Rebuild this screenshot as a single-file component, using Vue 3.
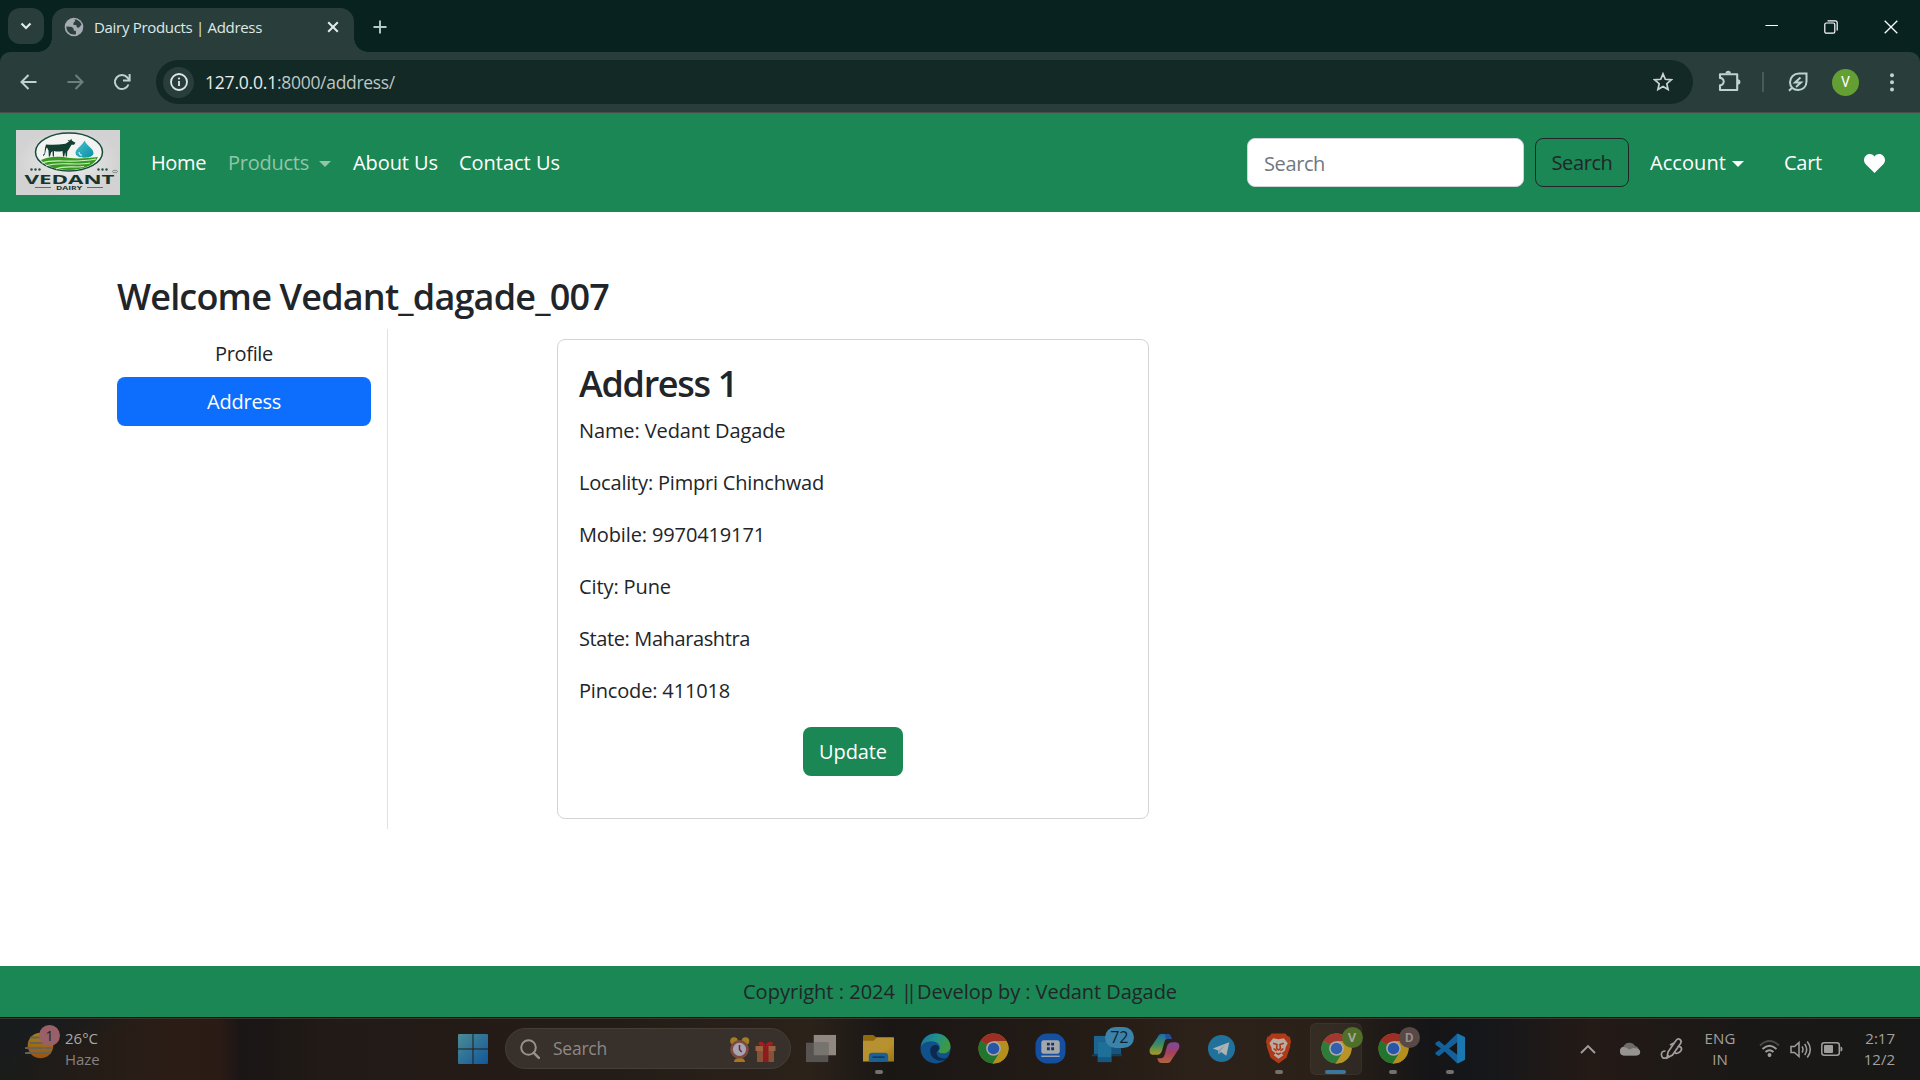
<script setup>
const navLinks = [
  { label: 'Home', width: 55 },
  { label: 'Products', width: 81, muted: true, caret: true },
  { label: 'About Us', width: 85 },
  { label: 'Contact Us', width: 101 },
]

const details = [
  { text: 'Name: Vedant Dagade', width: 206.5 },
  { text: 'Locality: Pimpri Chinchwad', width: 245 },
  { text: 'Mobile: 9970419171', width: 186 },
  { text: 'City: Pune', width: 92 },
  { text: 'State: Maharashtra', width: 171 },
  { text: 'Pincode: 411018', width: 151 },
]

const footerParts = [
  { text: 'Copyright : 2024', width: 152 },
  { text: '||', width: 10 },
  { text: 'Develop by : Vedant Dagade', width: 260 },
]

const apps = [
  { id: 'tasks' },
  { id: 'explorer', dot: true },
  { id: 'edge' },
  { id: 'chrome' },
  { id: 'store' },
  { id: 'phone', badge: '72' },
  { id: 'copilot' },
  { id: 'telegram' },
  { id: 'brave', dot: true },
  { id: 'chrome', active: true, profile: 'V' },
  { id: 'chrome', dot: true, profile: 'D' },
  { id: 'vscode', dot: true },
]

// Tracks a label so that it spans the given number of pixels.
const vFit = {
  mounted(el, { value }) {
    const natural = el.getBoundingClientRect().width
    el.style.letterSpacing = `${(value - natural) / el.textContent.length}px`
  },
}
</script>

<template>
  <div class="screen">
    <svg class="defs" width="0" height="0" aria-hidden="true">
      <defs>
        <linearGradient id="gWin" x1="0" y1="0" x2="1" y2="1"><stop offset="0" stop-color="#4d8b93" /><stop offset="1" stop-color="#10579b" /></linearGradient>
        <linearGradient id="gFolder" x1="0" y1="0" x2="1" y2="1"><stop offset="0" stop-color="#b59237" /><stop offset=".6" stop-color="#b8912c" /><stop offset="1" stop-color="#9b7414" /></linearGradient>
        <linearGradient id="gEdge" x1="0" y1="0" x2="1" y2=".4"><stop offset="0" stop-color="#1b6f9b" /><stop offset=".5" stop-color="#1f8f8f" /><stop offset="1" stop-color="#3f9a3f" /></linearGradient>
        <linearGradient id="gCopA" x1="0" y1="0" x2="0" y2="1"><stop offset="0" stop-color="#1c6fa8" /><stop offset=".5" stop-color="#3d8a63" /><stop offset="1" stop-color="#a89a26" /></linearGradient>
        <linearGradient id="gCopB" x1="0" y1="0" x2="0" y2="1"><stop offset="0" stop-color="#7a4aa0" /><stop offset=".5" stop-color="#a5405f" /><stop offset="1" stop-color="#b0653f" /></linearGradient>
        <linearGradient id="gSun" x1="0" y1="0" x2="0" y2="1"><stop offset="0" stop-color="#a3821c" /><stop offset="1" stop-color="#9c520e" /></linearGradient>
        <linearGradient id="gDrop" x1="0" y1="0" x2="1" y2="1"><stop offset="0" stop-color="#46c2cf" /><stop offset="1" stop-color="#0c8fa3" /></linearGradient>
        <radialGradient id="gLogo"><stop offset="0" stop-color="#ececec" /><stop offset="1" stop-color="#d2d2d2" /></radialGradient>
      </defs>
      <symbol id="tasks" viewBox="0 0 32 32"><path d="M8 2h23v21H8z" fill="#8f8780" /><path d="M0 10h23v20H0z" fill="#565350" /><path d="M8 10h15v13H8z" fill="#77736f" /></symbol>
      <symbol id="explorer" viewBox="0 0 32 32"><path d="M0 3.500q0-1.500 1.500-1.500H10q1 0 1.700.9L13 4h17.500Q32 4 32 5.500V12H0z" fill="#8f6a0c" /><path d="M0 8h11l3-3h18v24.500H0z" fill="url(#gFolder)" /><path d="M6 29.500V24q0-3.500 3.500-3.500h13q3.500 0 3.500 3.500v5.500z" fill="#1d6094" /><path d="M10.500 25h11" stroke="#0f3c66" stroke-width="1.800" stroke-linecap="round" /></symbol>
      <symbol id="edge" viewBox="0 0 32 32"><circle cx="16" cy="16" r="15.500" fill="#12508c" /><path d="M.8 14C2 5 9 .5 16.500.5 25 .5 31.500 7 31.500 14c0 4-3 7-7 7-3 0-5.500-.8-5.500-2 0-.8 1.500-1.500 1.500-4 0-3.500-3.500-6.500-8.500-6.500C6 8.500 2 11.500.8 14z" fill="url(#gEdge)" /><path d="M19 13.500c-4-3-8.500 0-8.500 5 0 6 5.500 10.500 12 10 2.500-.3 4.500-1.500 6-3-3 1.400-9.500 1-11-3-1.200-3 1-4.500 2.500-6z" fill="#0c2a4f" /></symbol>
      <symbol id="chrome" viewBox="0 0 32 32"><circle cx="16" cy="16" r="15.500" fill="#b58f1d" /><path d="M16 16L2.600 8.200A15.500 15.500 0 0 1 29.400 8.300H16z" fill="#9d2e26" /><path d="M16 16L2.600 8.200A15.500 15.500 0 0 0 15.300 31.500L22.500 19.800z" fill="#22752f" /><path d="M16 8.300h13.400A15.500 15.500 0 0 1 15.300 31.500l7.200-11.700z" fill="#b58f1d" /><circle cx="16" cy="16" r="7.600" fill="#a9a9a6" /><circle cx="16" cy="16" r="6" fill="#2857aa" /></symbol>
      <symbol id="store" viewBox="0 0 32 32"><rect x=".5" y=".5" width="31" height="31" rx="12" fill="#154f9f" /><rect x="6.500" y="7.500" width="19" height="14" rx="2.500" fill="#a4a8ad" /><path d="M12.300 10h3v3h-3zM16.700 10h3v3h-3zM12.300 14.800h3v3h-3zM16.700 14.800h3v3h-3z" fill="#17365f" /><path d="M6.500 24h19" stroke="#9aa3ae" stroke-width="1.500" /></symbol>
      <symbol id="phone" viewBox="0 0 32 32"><path d="M2 3h13v19H2z" fill="#1c6590" /><path d="M6 9h24v13H6z" fill="#17547f" /><path d="M0 22h31v2H0z" fill="#12405f" /><path d="M6 9h14v21H6z" fill="#1e7099" /><path d="M6 25h14v5H6z" fill="#155783" /></symbol>
      <symbol id="copilot" viewBox="0 0 32 32"><path d="M9 4c1-2.500 2.500-3 5-3h5c2.500 0 3.500 1.500 4.500 5H20c-2.500 0-3.500 1-4.300 4l-2.200 8c-1 3.300-3 4.500-6 4.500H4.500c-3.500 0-4.500-3-3.500-6.500z" fill="url(#gCopA)" /><path d="M23 28c-1 2.500-2.500 3-5 3h-5c-2.500 0-3.500-1.500-4.500-5H12c2.500 0 3.500-1 4.300-4l2.200-8c1-3.300 3-4.500 6-4.500h3c3.500 0 4.500 3 3.500 6.500z" fill="url(#gCopB)" /><path d="M16 1h3c2.500 0 3.500 1.500 4.500 5H20c-1.200 0-2 .2-2.700.8C17 4 17 2 16 1z" fill="#254e9d" /></symbol>
      <symbol id="telegram" viewBox="0 0 32 32"><circle cx="16" cy="16" r="14" fill="#20719c" /><path d="M7 16l17-6.500-3 14-5.500-4-2.500 2.500-.5-4z" fill="#adb3b4" /><path d="M12.500 18l7.500-5.500-5.500 6-.8 3z" fill="#7c9aa9" /></symbol>
      <symbol id="brave" viewBox="0 0 32 32"><path d="M9 .5h14l3 3h1.500L29 9l-1 3 .2 2-4 11.500L16 31.500 7.800 25.500 3.800 14l.2-2L3 9l1.500-5.500H6z" fill="#b03a18" /><path d="M10.500 5.500L16 6.500l5.500-1 4 5-2 4-.8 3.500L19 21l2 2-5 3.500L11 23l2-2-3.700-3-.8-3.500-2-4z" fill="#b9aaa2" /><path d="M10.500 10.500l4 1.500-.5 4 2 1.500 2-1.500-.5-4 4-1.500M11 16l3 2.500M21 16l-3 2.500M13.500 20.500L16 22l2.500-1.500" fill="none" stroke="#a83a1c" stroke-width="1.600" /></symbol>
      <symbol id="vscode" viewBox="0 0 32 32"><path d="M23 .5l8 4v23l-8 4L10 19l-6 5-3.500-2V20L6 16 .5 12v-2L4 8l6 5zM23 9.500L14.500 16 23 22.500z" fill="#14609a" fill-rule="evenodd" /><path d="M23 .5l8 4v23l-8 4z" fill="#1b77b0" /></symbol>
    </svg>

    <header class="tabstrip">
      <button class="tab-search"><svg width="14" height="14" viewBox="0 0 14 14"><path d="M2.500 4.500L7 9l4.500-4.500" fill="none" stroke="#e0ebe8" stroke-width="2.200" /></svg></button>
      <div class="tab">
        <svg class="globe" width="20" height="20" viewBox="0 0 20 20"><circle cx="10" cy="10" r="9.300" fill="#a6acb3" /><path d="M10.500 2.200c3.500.2 6 2.500 7 5.300l-2.200 2.800c-.8.8-2.300.5-2.600-.5l-.5-1.800H9.500V6c0-1 .9-1.500 1.800-1.600zM2.300 9.500l4 .2c2 .1 3.500 1.500 3.500 3.200v.9h2l.2 3.400c-5 1.400-9.500-2-9.700-7.700z" fill="#2d403e" /></svg>
        <span class="tab-title"><span v-fit="168" class="fit">Dairy Products | Address</span></span>
        <svg class="tab-close" width="12" height="12" viewBox="0 0 12 12"><path d="M1.200 1.200l9.600 9.600M10.800 1.200l-9.600 9.600" stroke="#e4eceb" stroke-width="2" /></svg>
      </div>
      <svg class="new-tab" width="14" height="14" viewBox="0 0 14 14"><path d="M7 .5v13M.5 7h13" stroke="#b4cbc6" stroke-width="1.900" /></svg>
      <div class="win-controls">
        <svg width="14" height="14" viewBox="0 0 14 14"><path d="M1.500 5.500h13" stroke="#fff" stroke-width="1" /></svg>
        <svg width="14" height="14" viewBox="0 0 14 14" fill="none" stroke="#fff" stroke-width="1.200"><rect x=".8" y="3" width="10" height="10.200" rx="1.500" /><path d="M3.500.8h7.700q2 0 2 2v7.700" /></svg>
        <svg width="14" height="14" viewBox="0 0 14 14"><path d="M.7.7l12.600 12.600M13.300.7L.7 13.300" stroke="#fff" stroke-width="1.300" /></svg>
      </div>
    </header>

    <div class="toolbar">
      <svg class="back" width="17" height="16" viewBox="0 0 17 16"><path d="M16.500 8H2M8.500 1L1.500 8l7 7" fill="none" stroke="#bcd3ce" stroke-width="2" /></svg>
      <svg class="forward" width="17" height="16" viewBox="0 0 17 16"><path d="M.5 8H15M8.500 1l7 7-7 7" fill="none" stroke="#6d807c" stroke-width="2" /></svg>
      <svg class="reload" width="18" height="18" viewBox="0 0 18 18"><path d="M15.500 11.500A7 7 0 1 1 14.300 4.500L16.500 7" fill="none" stroke="#bcd3ce" stroke-width="2" /><path d="M16.600 1v6.600H10" fill="none" stroke="#bcd3ce" stroke-width="2" /></svg>
      <div class="omnibox">
        <span class="info"><svg width="18" height="18" viewBox="0 0 18 18"><circle cx="9" cy="9" r="8" fill="none" stroke="#e0e8e6" stroke-width="1.800" /><path d="M9 8v5" stroke="#e0e8e6" stroke-width="1.800" /><circle cx="9" cy="5.500" r="1.100" fill="#e0e8e6" /></svg></span>
        <span class="url"><span v-fit="72" class="fit host">127.0.0.1</span><span v-fit="118" class="fit">:8000/address/</span></span>
        <svg class="star" width="20" height="20" viewBox="0 0 20 20"><path d="M10 1.800l2.300 5.500 6 .5-4.500 3.900 1.300 5.800-5.100-3.100-5.100 3.100 1.300-5.800L1.700 7.800l6-.5z" fill="none" stroke="#c9d4d2" stroke-width="1.700" /></svg>
      </div>
      <svg class="puzzle" width="23" height="22" viewBox="0 0 23 22"><path d="M2 4.200h17.200V11v9H2v-4.700a3.700 3.700 0 0 0 0-7.400z" fill="none" stroke="#bcd3ce" stroke-width="2.100" stroke-linejoin="round" /><path d="M7.500 3.500a2.700 2.700 0 0 1 5.400 0zM19.700 9.200a2.700 2.700 0 0 1 0 5.400z" fill="#bcd3ce" /></svg>
      <span class="bar" />
      <svg class="leaf" width="20" height="20" viewBox="0 0 20 20"><path d="M18.500 1.500v8c0 5-3.500 8.500-8.300 8.500C5.500 18 2 15 2 10.300 2 5 6 1.500 11 1.500zM1 18.700L5 15" fill="none" stroke="#bcd3ce" stroke-width="2" /><path d="M12.500 5.500l-5.500 5h6L8 15" fill="none" stroke="#bcd3ce" stroke-width="2" /></svg>
      <span class="avatar">V</span>
      <svg class="kebab" width="4" height="19" viewBox="0 0 4 19" fill="#bcd3ce"><circle cx="2" cy="2.200" r="2" /><circle cx="2" cy="9.200" r="2" /><circle cx="2" cy="16.400" r="2" /></svg>
    </div>

    <nav class="navbar">
      <svg class="logo" width="104" height="65" viewBox="0 0 104 65">
        <path d="M0 0h104v65H0z" fill="url(#gLogo)" />
        <ellipse cx="53" cy="22" rx="33.500" ry="19" fill="#f3f4f2" stroke="#164b39" stroke-width="1.500" />
        <path d="M25 30c9-4 18-4 29-2 9 1 18 0 28-1-3 8-15 13-29 13s-23-4-28-10z" fill="#359b1f" />
        <path d="M26 33c12-5 28 1 54-4M30 36c12-5 28 0 44-3M40 39c8-4 20-1 28-2.500" fill="none" stroke="#d6ecc8" stroke-width="1.100" />
        <path d="M30 14.500q10 .8 19.500-.8l3.500-2.200-1.500-1.800 2.500.8 1.300-1.800.7 2 3.500 2-1.500 2h-2.500l-2.500 4.300-1.700 2.500-.3 5h-1.200l-.6-4.500-1 4.500h-1.200l-.5-5.500q-4.500 1-8.500 0L38 26.500h-1.200l-.3-5.500-1.500 1.500-1 4h-1.200l-.3-6-1.500-3-.8 1-1.200 5.500-1.500 2.200-.5-1.500 1.500-1.200.5-5.500z" fill="#123f32" />
        <path d="M68.500 10.500c2 5 9 8 9 12.500 0 3-4 4.700-9 4.700s-9-1.700-9-4.700c0-4.500 7-7.500 9-12.500z" fill="url(#gDrop)" />
        <path d="M63 22q0 2.500 3 3.500" fill="none" stroke="#b5ecf2" stroke-width="1.200" />
        <g fill="#26503f"><circle cx="15.500" cy="39.500" r="1.200" /><circle cx="19.500" cy="39.500" r="1.200" /><circle cx="23.500" cy="39.500" r="1.200" /><circle cx="82.500" cy="39.500" r="1.200" /><circle cx="86.500" cy="39.500" r="1.200" /><circle cx="90.500" cy="39.500" r="1.200" /></g>
        <text x="8.500" y="53.500" textLength="90" lengthAdjust="spacingAndGlyphs" class="logo-name">VEDANT</text>
        <text x="40" y="59.500" textLength="26" lengthAdjust="spacingAndGlyphs" class="logo-sub">DAIRY</text>
        <path d="M19 57.500h16M71 57.500h16" stroke="#47665b" stroke-width=".9" />
        <ellipse cx="99" cy="41.500" rx="2.500" ry="1.200" fill="none" stroke="#62766e" stroke-width=".7" />
      </svg>
      <div class="links">
        <a v-for="l in navLinks" :key="l.label" :class="{ muted: l.muted }"><span v-fit="l.width" class="fit">{{ l.label }}</span><i v-if="l.caret" class="caret wide" /></a>
      </div>
      <div class="search-input"><span v-fit="61" class="fit">Search</span></div>
      <button class="search-btn"><span v-fit="61" class="fit">Search</span></button>
      <a class="account"><span v-fit="76" class="fit">Account</span><i class="caret" /></a>
      <a class="cart"><span v-fit="38" class="fit">Cart</span></a>
      <svg class="heart" width="21" height="19" viewBox="0 0 21 19"><path d="M10.500 19L1.700 10.300C-.6 7.800-.5 4 1.700 1.900 4.300-.7 8-.4 10.500 2.500 13-.4 16.700-.7 19.300 1.900c2.200 2.100 2.300 5.900 0 8.400z" fill="#fff" /></svg>
    </nav>

    <main class="page">
      <h2 class="welcome"><span v-fit="492" class="fit">Welcome Vedant_dagade_007</span></h2>
      <div class="columns">
        <aside class="side">
          <a class="pill"><span v-fit="58" class="fit">Profile</span></a>
          <a class="pill on"><span v-fit="74" class="fit">Address</span></a>
        </aside>
        <section class="card">
          <h2><span v-fit="158" class="fit">Address 1</span></h2>
          <p v-for="d in details" :key="d.text"><span v-fit="d.width" class="fit">{{ d.text }}</span></p>
          <button class="update"><span v-fit="68" class="fit">Update</span></button>
        </section>
      </div>
    </main>

    <footer class="copyright"><span v-for="f in footerParts" :key="f.text" v-fit="f.width" class="fit">{{ f.text }}</span></footer>

    <div class="taskbar">
      <div class="weather">
        <div class="sun">
          <svg width="30" height="30" viewBox="0 0 30 30"><circle cx="15.500" cy="14.500" r="12.800" fill="url(#gSun)" /><path d="M6 6.500h8M5.500 12h18M1 17h16M20 17h6M1 22h24" stroke="#66625a" stroke-width="2.200" stroke-linecap="round" /></svg>
          <span class="count">1</span>
        </div>
        <div class="weather-text"><span><b v-fit="33" class="fit temp">26°C</b></span><span><b v-fit="34.500" class="fit haze">Haze</b></span></div>
      </div>
      <svg class="start" width="30" height="30" viewBox="0 0 30 30"><path d="M0 1q0-1 1-1h13.500v14.500H0zM15.500 0H29q1 0 1 1v13.500H15.500zM0 15.500h14.500V30H1q-1 0-1-1zM15.500 15.500H30V29q0 1-1 1H15.500z" fill="url(#gWin)" /></svg>
      <div class="task-search">
        <svg width="20" height="20" viewBox="0 0 20 20"><circle cx="8.500" cy="8.500" r="7.300" fill="none" stroke="#96928f" stroke-width="2" /><path d="M13.800 13.800l5 5" stroke="#96928f" stroke-width="2.500" stroke-linecap="round" /></svg>
        <span class="task-label"><span v-fit="54" class="fit">Search</span></span>
        <svg class="gifts" width="48" height="26" viewBox="0 0 48 26">
          <path d="M5 25q0-4 5.500-4T16 25z" fill="#a8741e" /><circle cx="5" cy="4" r="3.800" fill="#a07f22" /><circle cx="16.500" cy="4" r="3.800" fill="#a07f22" /><circle cx="10.500" cy="12.300" r="9.300" fill="#7d4a43" /><circle cx="10.500" cy="12.300" r="6.600" fill="#a5a4b0" /><path d="M10.500 8v4.500l2.200 2.500" fill="none" stroke="#6d2630" stroke-width="1.500" />
          <path d="M28 12h17v13H28z" fill="#885236" /><path d="M26.500 9h20v5h-20z" fill="#9a6243" /><path d="M34 9h5.500v16H34z" fill="#8e1c1d" /><path d="M36.500 8.500c-2-5-7.500-4.500-7-1.500.2 2 3 2 7 1.500 4 .5 7.500.5 7.500-1.500 0-3-5.500-3.500-7.500 1.500z" fill="#a02020" />
        </svg>
      </div>
      <div class="apps">
        <div v-for="(a, i) in apps" :key="i" class="app" :class="{ active: a.active }">
          <svg width="31" height="31"><use :href="'#' + a.id" /></svg>
          <span v-if="a.badge" class="badge">{{ a.badge }}</span>
          <span v-if="a.profile" class="profile" :class="'p' + a.profile">{{ a.profile }}</span>
          <i v-if="a.dot || a.active" class="mark" />
        </div>
      </div>
      <div class="tray">
        <svg class="chev" width="16" height="10" viewBox="0 0 16 10"><path d="M1 9l7-7 7 7" fill="none" stroke="#a09e9c" stroke-width="1.900" /></svg>
        <svg class="cloud" width="22" height="14" viewBox="0 0 22 14"><path d="M5 13.500A4.600 4.600 0 0 1 4.500 4.500 6.500 6.500 0 0 1 16 4a5 5 0 0 1 1 9.500z" fill="#6e6b69" /><path d="M4.500 13.500a4.300 4.300 0 0 1-.3-8.400q3 0 6 2.300l4-1.500q7 0 7 4.200 0 3.400-3.700 3.400z" fill="#969391" /></svg>
        <svg class="pen" width="23" height="22" viewBox="0 0 23 22" fill="none" stroke="#a09e9c" stroke-width="1.700"><path d="M7 20l1-6L16 2.500q2-2.500 4-1t.5 4L12.500 17zM5.500 13q-4.500 0-4 4t4 3q2 0 3-3M17 9q4-1 4.500 1.500T18 15q-3 1-3.500-1.500M10 7l4-2" /></svg>
        <div class="lang"><span v-fit="31" class="fit">ENG</span><span>IN</span></div>
        <svg class="wifi" width="21" height="18" viewBox="0 0 21 18" fill="none" stroke="#a09e9c" stroke-width="1.900"><path d="M1 5.500q9.500-9 19 0" stroke="#4b4846" /><path d="M3.500 9q7-6.500 14 0M6.500 12q4-3.600 8 0" /><circle cx="10.500" cy="15" r="1.500" fill="#a09e9c" stroke="none" /><circle cx="10.500" cy="15" r="1" fill="#a09e9c" /></svg>
        <svg class="sound" width="22" height="19" viewBox="0 0 22 19" fill="none" stroke="#a09e9c" stroke-width="1.500"><path d="M1 6.500h3.500L9 2.500v14l-4.500-4H1zM12 6.500q2 3 0 6M14.700 4q4 5.500 0 11M17.300 1.500q6 8 0 16" /></svg>
        <svg class="battery" width="22" height="14" viewBox="0 0 22 14"><rect x=".8" y=".8" width="17.500" height="12.400" rx="2.500" fill="none" stroke="#a09e9c" stroke-width="1.500" /><rect x="3" y="3" width="9" height="8" rx="1" fill="#a09e9c" /><path d="M19.500 4.500q2 0 2 2.500t-2 2.500z" fill="#a09e9c" /></svg>
        <div class="clock"><span>2:17</span><span>12/2</span></div>
      </div>
    </div>
  </div>
</template>

<style>
body {
  margin: 0;
  overflow: hidden;
}
</style>

<style scoped>
.screen {
  width: 1920px;
  height: 1080px;
  display: flex;
  flex-direction: column;
  background: #fff;
  color: #212529;
  font: 20px/30px "Open Sans", "Noto Sans", sans-serif;
}
.screen * { box-sizing: border-box; }
.screen svg { display: block; flex: none; }
.screen .defs { position: absolute; }
.fit { display: inline-block; white-space: nowrap; }
button { font: inherit; border: 0; padding: 0; }

.tabstrip {
  height: 52px;
  background: #08221f;
  display: flex;
  align-items: flex-start;
  padding: 8px 0 0 8px;
}
.tab-search {
  width: 36px;
  height: 36px;
  border-radius: 12px;
  background: #293e3b;
  display: flex;
  align-items: center;
  justify-content: center;
}
.tab {
  position: relative;
  width: 302px;
  height: 44px;
  margin-left: 8px;
  padding: 0 15px 6px 12px;
  border-radius: 14px 14px 0 0;
  background: #293e3b;
  display: flex;
  align-items: center;
}
.tab::before,
.tab::after {
  content: "";
  position: absolute;
  bottom: 0;
  width: 14px;
  height: 14px;
}
.tab::before { left: -14px; background: radial-gradient(circle at 0 0, transparent 13.5px, #293e3b 14px); }
.tab::after { right: -14px; background: radial-gradient(circle at 100% 0, transparent 13.5px, #293e3b 14px); }
.tab-title { margin-left: 10px; color: #dfe8e6; font-size: 15px; line-height: 20px; }
.tab-close { margin-left: auto; margin-bottom: 1px; }
.new-tab { margin: 12px 0 0 19px; }
.win-controls { display: flex; gap: 46px; margin: 12px 22px 0 auto; }

.toolbar {
  height: 61px;
  background: #293e3b;
  border-bottom: 1px solid #484d4b;
  border-radius: 10px 10px 0 0;
  box-shadow: 0 -10px 0 0 #08221f;
  display: flex;
  align-items: center;
  padding-left: 20px;
  clip-path: inset(0);
  position: relative;
}
.forward { margin-left: 30px; }
.reload { margin-left: 29px; }
.omnibox {
  width: 1537px;
  height: 44px;
  margin-left: 25px;
  padding: 0 20px 0 7px;
  border-radius: 22px;
  background: #122926;
  display: flex;
  align-items: center;
}
.info { width: 31px; height: 31px; border-radius: 50%; background: #293e3b; display: flex; align-items: center; justify-content: center; }
.url { margin-left: 11px; font-size: 17.500px; color: #bcc6c4; display: flex; }
.host { color: #e6eceb; }
.star { margin-left: auto; }
.puzzle { margin: 0 0 2px 25px; }
.bar { width: 2px; height: 20px; background: #455c58; margin-left: 21px; }
.leaf { margin-left: 24px; }
.avatar { width: 27px; height: 27px; margin-left: 24px; border-radius: 50%; background: #649f33; color: #fff; font: 14px/27px Roboto, sans-serif; text-align: center; }
.kebab { margin-left: 31px; }

.navbar {
  height: 99px;
  background: #1a8754;
  color: #fff;
  display: flex;
  align-items: center;
  padding-left: 16px;
}
.navbar a, .search-input, .search-btn { line-height: 30px; }
.navbar a { padding-top: 1px; }
.logo-name { font: 700 12px "Open Sans", sans-serif; fill: #17352d; }
.logo-sub { font: 700 5.500px "Open Sans", sans-serif; fill: #17352d; }
.links { display: flex; gap: 22px; margin-left: 31px; }
.links a { display: flex; align-items: center; }
.links a:last-child { margin-left: -1px; }
.muted { color: #93c5ab; }
.caret { display: inline-block; border: 6px solid transparent; border-top: 6px solid currentColor; border-bottom: 0; margin: 1px 0 0 6px; }
.caret.wide { margin-left: 10px; }
.screen .search-input { width: 277px; height: 49px; margin-left: auto; padding: 10px 16px; border: 1px solid #ced4da; border-radius: 8px; background: #fff; color: #70777e; }
.screen .search-btn { width: 94px; height: 49px; margin-left: 11px; padding-top: 1px; border: 1px solid #212529; border-radius: 8px; background: none; color: #212529; }
.account { margin-left: 21px; display: flex; align-items: center; width: 93px; }
.cart { margin-left: 41px; width: 38px; }
.heart { margin: 2px 35px 0 42px; }

.page { flex: 1; padding-left: 117px; }
h2 { margin: 0; font-weight: 600; font-size: 36px; line-height: 48px; }
.welcome { padding-top: 61px; height: 117px; }
.columns { display: flex; align-items: flex-start; }
.side { width: 271px; height: 500px; border-right: 1px solid #dee2e6; padding-right: 16px; display: flex; flex-direction: column; }
.pill { height: 49px; border-radius: 8px; display: flex; align-items: center; justify-content: center; padding-top: 1px; }
.pill:first-child { height: 48px; }
.on { background: #0d6efd; color: #fff; }
.card {
  width: 592px;
  height: 480px;
  margin: 10px 0 0 169px;
  padding: 20px 21px;
  border: 1px solid #d2d4d6;
  border-radius: 8px;
  display: flex;
  flex-direction: column;
}
.card h2 { margin-bottom: 8px; }
.card p { margin: 0 0 22px; line-height: 30px; height: 30px; }
.update { width: 100px; height: 49px; margin: -1px auto 0; padding-top: 1px; border-radius: 8px; background: #1a8754; color: #fff; }
.copyright { height: 51px; background: #1a8754; line-height: 51px; display: flex; justify-content: center; gap: 6px; }

.taskbar {
  height: 63px;
  border-top: 1px solid #0c120d;
  box-shadow: inset 0 1px #383431;
  background:
    linear-gradient(155deg, #191c1d 0 20%, #191c1d00 55%) 0 0 / 130px 63px no-repeat,
    linear-gradient(90deg, #1a1b1a, #241c17 90px, #2b1d16 165px, #2a1b15 220px, #1a1615 240px, #1c1715 270px, #211a16 320px, #241b16 480px, #241d17 620px, #2b221a 810px, #191614 890px, #1d1815 950px, #251c15 1100px, #2c221a 1200px, #2a2018 1330px, #151517 1430px, #15171a 1480px, #241a16 1590px, #1a1817 1740px, #181818 1920px);
  display: flex;
  color: #a3a09e;
  font-size: 15px;
  line-height: 21px;
}
.weather { width: 458px; padding: 8px 0 0 25px; display: flex; }
.sun { position: relative; width: 30px; height: 30px; margin-top: 5px; }
.count { position: absolute; left: 14px; top: -6px; width: 21px; height: 21px; border-radius: 50%; background: #9a6067; color: #252020; text-align: center; font-size: 14px; }
.weather-text { display: flex; flex-direction: column; padding: 2px 0 0 10px; }
.weather-text b { font-weight: 400; }
.temp { color: #aaa7a4; }
.haze { color: #86827f; }
.start { margin-top: 16px; }
.task-search { width: 286px; height: 41px; margin: 10px 2px 0 17px; padding: 0 13px 0 14px; border-radius: 21px; background: #37302b; border: 1px solid #443d38; display: flex; align-items: center; }
.task-label { margin-left: 13px; font-size: 17.500px; color: #8e8985; }
.gifts { margin-left: auto; margin-top: 3px; }
.apps { display: flex; width: 686px; margin-top: 5px; }
.app { position: relative; flex: 1; height: 52px; padding-top: 10px; display: flex; justify-content: center; }
.app.active::before { content: ""; position: absolute; inset: 0 2.500px; border-radius: 6px; background: #ffffff0d; border: 1px solid #ffffff0a; }
.mark { position: absolute; left: 50%; bottom: 1px; width: 8px; height: 4px; margin-left: -4px; border-radius: 2px; background: #73706d; }
.active .mark { width: 21px; margin-left: -11px; background: #39789c; }
.badge { position: absolute; left: 26px; top: 4px; width: 29px; height: 21px; border-radius: 11px; background: #3b83ab; color: #10222e; font-size: 16px; text-align: center; }
.profile { position: absolute; left: 34px; top: 4px; width: 21px; height: 21px; border-radius: 50%; text-align: center; font: 600 13px/21px Roboto, sans-serif; color: #a8a8a0; }
.pV { background: #50702a; }
.pD { background: #584846; color: #9a908e; }
.tray { display: flex; align-items: center; margin-left: auto; padding-right: 25px; }
.cloud { margin-left: 23px; }
.pen { margin-left: 19px; }
.lang { width: 32px; margin-left: 21px; display: flex; flex-direction: column; align-items: center; }
.wifi { margin-left: 23px; }
.sound { margin-left: 10px; }
.battery { margin-left: 9px; }
.clock { margin-left: 20px; display: flex; flex-direction: column; text-align: right; width: 32px; }
</style>
